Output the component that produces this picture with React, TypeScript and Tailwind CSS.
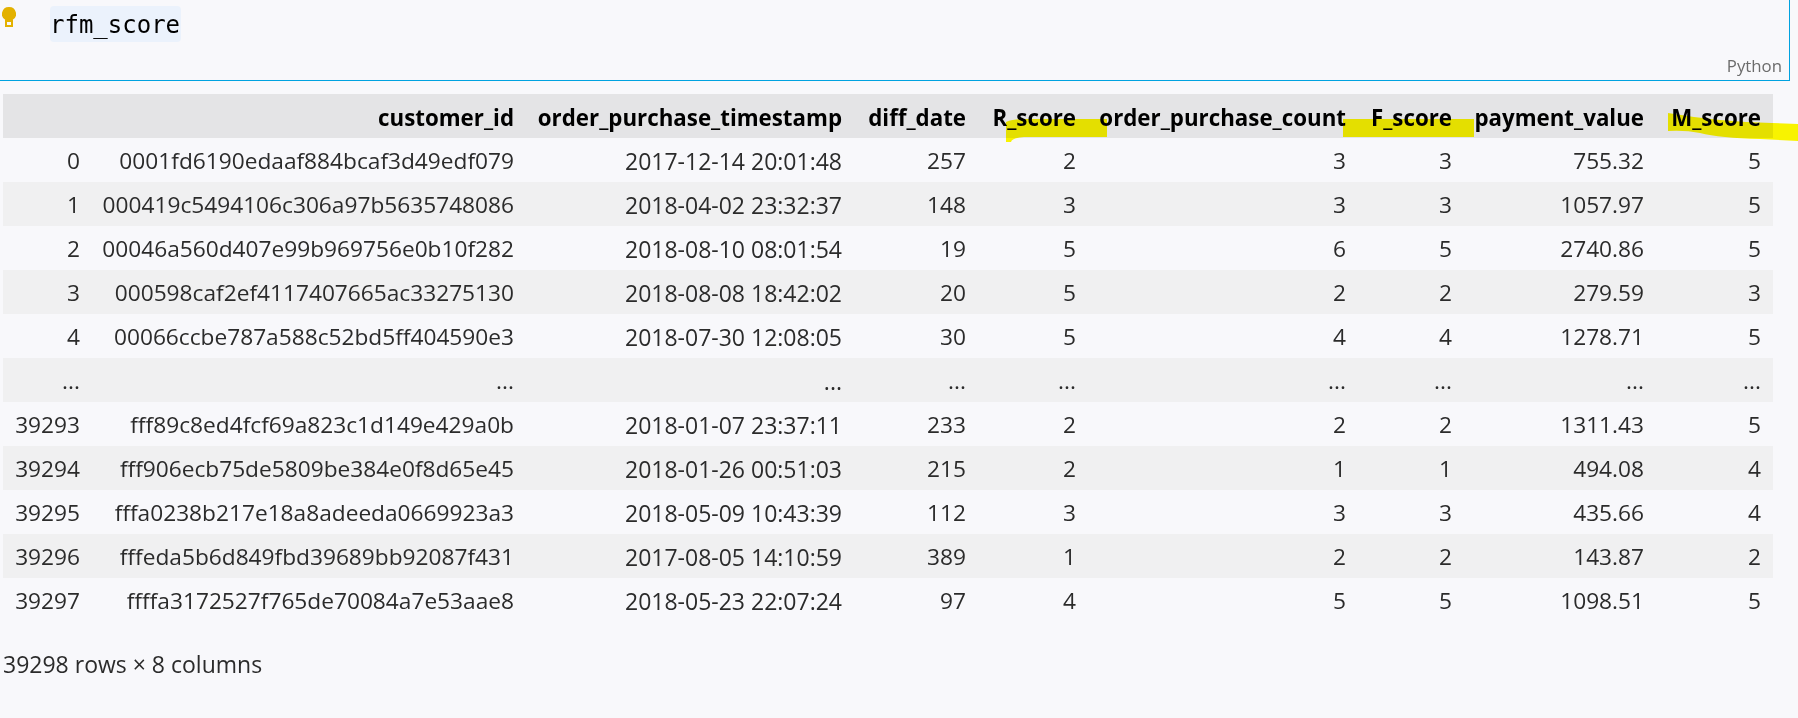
const columns = [
  "",
  "customer_id",
  "order_purchase_timestamp",
  "diff_date",
  "R_score",
  "order_purchase_count",
  "F_score",
  "payment_value",
  "M_score",
];

const rows = [
  ["0", "0001fd6190edaaf884bcaf3d49edf079", "2017-12-14 20:01:48", "257", "2", "3", "3", "755.32", "5"],
  ["1", "000419c5494106c306a97b5635748086", "2018-04-02 23:32:37", "148", "3", "3", "3", "1057.97", "5"],
  ["2", "00046a560d407e99b969756e0b10f282", "2018-08-10 08:01:54", "19", "5", "6", "5", "2740.86", "5"],
  ["3", "000598caf2ef4117407665ac33275130", "2018-08-08 18:42:02", "20", "5", "2", "2", "279.59", "3"],
  ["4", "00066ccbe787a588c52bd5ff404590e3", "2018-07-30 12:08:05", "30", "5", "4", "4", "1278.71", "5"],
  ["...", "...", "...", "...", "...", "...", "...", "...", "..."],
  ["39293", "fff89c8ed4fcf69a823c1d149e429a0b", "2018-01-07 23:37:11", "233", "2", "2", "2", "1311.43", "5"],
  ["39294", "fff906ecb75de5809be384e0f8d65e45", "2018-01-26 00:51:03", "215", "2", "1", "1", "494.08", "4"],
  ["39295", "fffa0238b217e18a8adeeda0669923a3", "2018-05-09 10:43:39", "112", "3", "3", "3", "435.66", "4"],
  ["39296", "fffeda5b6d849fbd39689bb92087f431", "2017-08-05 14:10:59", "389", "1", "2", "2", "143.87", "2"],
  ["39297", "ffffa3172527f765de70084a7e53aae8", "2018-05-23 22:07:24", "97", "4", "5", "5", "1098.51", "5"],
];

const App = () => {
  return (
    <div className="relative h-[718px] w-[1798px] overflow-hidden bg-[#f8f8fb] font-['Open_Sans',sans-serif] text-[22.7px] text-[#2b2b2b]">
      {/* code cell */}
      <div className="relative h-[81px] w-[1790px] border-r border-b border-[#00a2e0]">
        <svg className="absolute left-[2px] top-[7px]" width="14" height="20" viewBox="0 0 14 20">
          <path d="M4 13.5h6v5.5h-6z" fill="#f8f8fb" stroke="#e3b100" strokeWidth="2" />
          <path d="M7 0a7 7 0 0 1 3.5 13.1V15h-7v-1.9A7 7 0 0 1 7 0z" fill="#e3b100" />
        </svg>
        <div className="absolute left-[50px] top-[6px] flex h-[36px] w-[131px] items-center rounded-[4px] bg-[#ebf2fc] pt-[2px] font-['DejaVu_Sans_Mono',monospace] text-[24px] text-black">
          rfm_score
        </div>
        <div className="absolute bottom-[2px] right-[7px] text-[16.8px] leading-[24px] text-[#6b6b6b]">Python</div>
      </div>

      {/* dataframe */}
      <div className="ml-[3px] mt-[13px] w-[1770px]">
        <table className="w-[1770px] table-fixed border-collapse">
          <colgroup>
            <col className="w-[89px]" />
            <col className="w-[434px]" />
            <col className="w-[328px]" />
            <col className="w-[124px]" />
            <col className="w-[110px]" />
            <col className="w-[270px]" />
            <col className="w-[106px]" />
            <col className="w-[192px]" />
            <col className="w-[117px]" />
          </colgroup>
          <thead>
            <tr className="h-[44px] bg-[#e4e4e6]">
              {columns.map((c, i) => (
                <th key={i} className="whitespace-nowrap pr-[12px] pt-[4px] text-right text-[22.3px] leading-[30px] font-bold text-black">
                  {c}
                </th>
              ))}
            </tr>
          </thead>
          <tbody>
            {rows.map((row, r) => (
              <tr key={r} className={r % 2 === 1 ? "h-[44px] bg-[#f0f0f1]" : "h-[44px]"}>
                {row.map((v, i) => (
                  <td key={i} className={i === 2 ? "whitespace-nowrap pr-[12px] pt-[1px] text-right text-[23px] leading-[30px]" : "whitespace-nowrap pr-[12px] pt-[1px] text-right leading-[30px]"}>
                    {v}
                  </td>
                ))}
              </tr>
            ))}
          </tbody>
        </table>
        <div className="mt-[27px] text-[23px] leading-[30px]">39298 rows × 8 columns</div>
      </div>

      {/* marker strokes drawn over the screenshot */}
      <svg className="pointer-events-none absolute left-0 top-0 mix-blend-multiply" width="1798" height="718">
        <path d="M1006 122Q1012 119 1024 119H1107V137H1024Q1012 138 1011 142H1006Z" fill="#fffa00" />
        <path d="M1343 119H1474V137H1343Z" fill="#fffa00" />
        <path d="M1668 113Q1720 122 1772 123L1798 124V141L1760 139Q1720 138 1700 133Q1685 130 1668 131Z" fill="#fffa00" />
      </svg>
    </div>
  );
};

export default App;
